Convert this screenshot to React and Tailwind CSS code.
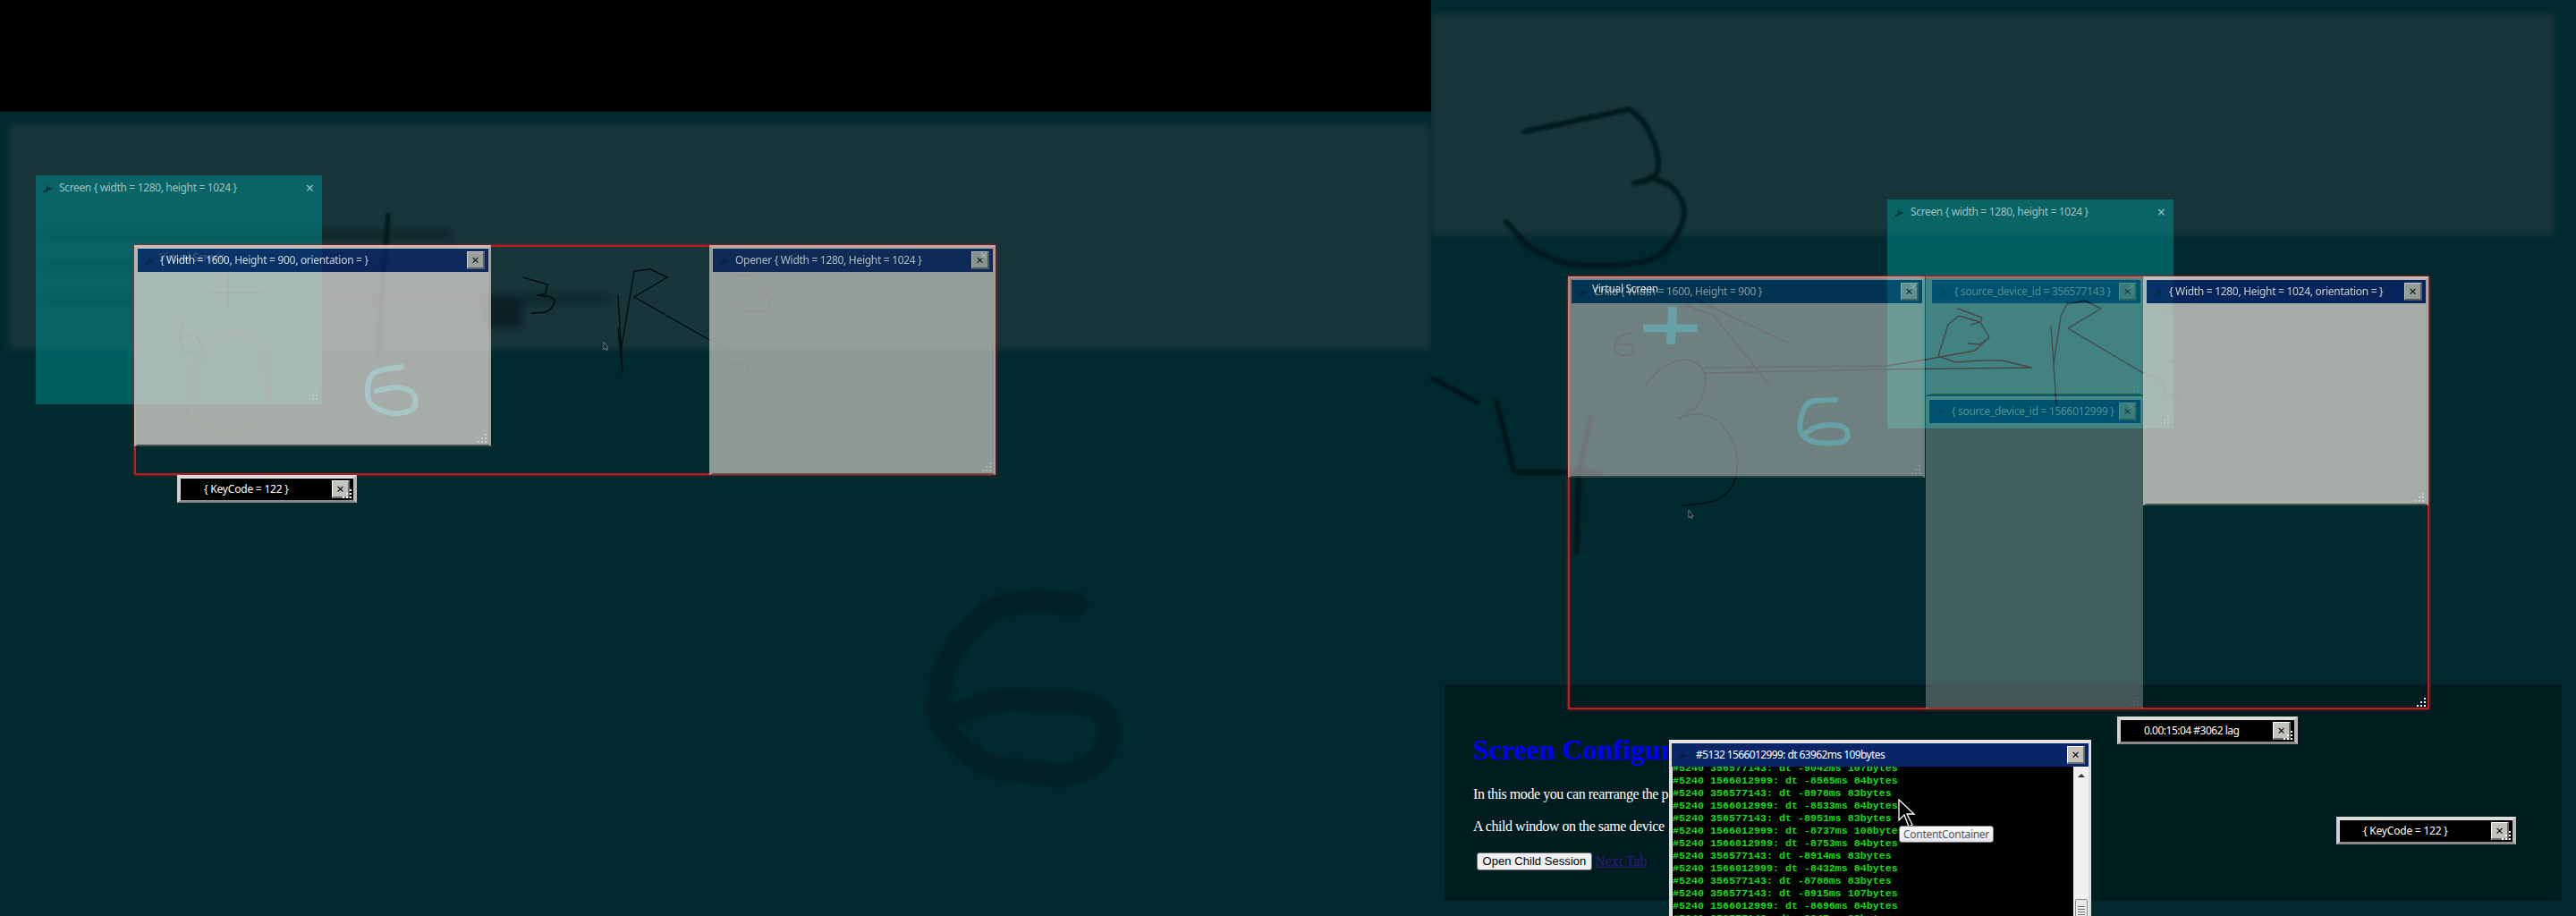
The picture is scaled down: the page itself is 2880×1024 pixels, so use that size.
import clsx from 'clsx'

const logLines = [
  '#5240 356577143: dt -9042ms 107bytes',
  '#5240 1566012999: dt -8565ms 84bytes',
  '#5240 356577143: dt -8978ms 83bytes',
  '#5240 1566012999: dt -8533ms 84bytes',
  '#5240 356577143: dt -8951ms 83bytes',
  '#5240 1566012999: dt -8737ms 108bytes',
  '#5240 1566012999: dt -8753ms 84bytes',
  '#5240 356577143: dt -8914ms 83bytes',
  '#5240 1566012999: dt -8432ms 84bytes',
  '#5240 356577143: dt -8788ms 83bytes',
  '#5240 356577143: dt -8915ms 107bytes',
  '#5240 1566012999: dt -8696ms 84bytes',
  '#5240 356577143: dt -8847ms 83bytes',
]

// catmull-rom through the sampled pen points, so the digits don't look polygonal
const smooth = (pts) => {
  let d = `M${pts[0][0]} ${pts[0][1]}`
  for (let i = 0; i < pts.length - 1; i++) {
    const p0 = pts[i - 1] || pts[i]
    const p1 = pts[i]
    const p2 = pts[i + 1]
    const p3 = pts[i + 2] || p2
    const c1x = p1[0] + (p2[0] - p0[0]) / 6
    const c1y = p1[1] + (p2[1] - p0[1]) / 6
    const c2x = p2[0] - (p3[0] - p1[0]) / 6
    const c2y = p2[1] - (p3[1] - p1[1]) / 6
    d += ` C${c1x} ${c1y} ${c2x} ${c2y} ${p2[0]} ${p2[1]}`
  }
  return d
}

const WaveIcon = ({ className }) => (
  <svg viewBox="0 0 14 14" className={clsx('w-[13px] h-[13px] shrink-0', className)}>
    <path
      d="M1 13 L3 9 L4.5 10.5 L6.5 2 L7.5 8 L9 5 L10 7 L13 6.5 L10 9 L8 8.5 L6.5 10 L5 12 L3.5 11 Z"
      fill="currentColor"
    />
  </svg>
)

const Grip = ({ className }) => (
  <svg viewBox="0 0 12 12" className={clsx('absolute w-[12px] h-[12px]', className)}>
    <g fill="#ffffff">
      <rect x="8" y="0" width="2" height="2" />
      <rect x="4" y="4" width="2" height="2" />
      <rect x="8" y="4" width="2" height="2" />
      <rect x="0" y="8" width="2" height="2" />
      <rect x="4" y="8" width="2" height="2" />
      <rect x="8" y="8" width="2" height="2" />
    </g>
  </svg>
)

const CloseButton = ({ ghost, className }) => (
  <div
    className={clsx(
      'relative w-[20px] h-[20px] shrink-0 flex items-center justify-center bg-[#c4c2bc] border-t border-l border-t-white border-l-white border-b-2 border-r-2 border-b-[#6c6c6c] border-r-[#6c6c6c] text-[15px] leading-none text-black',
      className
    )}
  >
    ×
    {ghost && (
      <span className="absolute -top-[4px] right-0 text-[15px] leading-none text-white">
        ×
      </span>
    )}
  </div>
)

const Win = ({ title, ghost, className, titleClassName, children }) => (
  <div
    className={clsx(
      'absolute flex flex-col bg-[#dad6d0] border-t-4 border-l-4 border-r-[3px] border-b-2 border-t-[#e9e5e0] border-l-[#dcd8d2] border-r-[#d0ccc6] border-b-[#5a5a5a]',
      className
    )}
  >
    <div
      className={clsx(
        'h-[26px] flex items-center pl-[6px] pr-[4px] gap-[6px] bg-[#0a2468] text-white',
        titleClassName
      )}
    >
      <WaveIcon className="text-[#0a1a3a]" />
      <span className="flex-1 min-w-0 whitespace-nowrap text-[12px] tracking-[-0.3px]">{title}</span>
      <CloseButton ghost={ghost} />
    </div>
    {children}
    <Grip className="right-0 bottom-0" />
  </div>
)

const ScreenWin = ({ className }) => (
  <div className={clsx('absolute bg-[#008080]/60 text-[#9cc4c4]', className)}>
    <div className="h-[28px] flex items-center pl-[7px] pr-[9px] gap-[6px]">
      <WaveIcon className="text-[#0a2a3a]" />
      <span className="flex-1 min-w-0 whitespace-nowrap text-[12px] tracking-[-0.35px]">
        Screen {'{'} width = 1280, height = 1024 {'}'}
      </span>
      <span className="text-[16px] leading-none">×</span>
    </div>
    <Grip className="right-[3px] bottom-[3px] opacity-30" />
  </div>
)

const MiniWin = ({ title, className, textClassName }) => (
  <div
    className={clsx(
      'absolute h-[31px] w-[201px] flex items-center pl-[26px] pr-[4px] bg-black border-t-4 border-l-4 border-r-4 border-b-[3px] border-t-[#dcdcdc] border-l-[#d0d0d0] border-r-[#b8b8b8] border-b-[#8a8a8a] text-white',
      className
    )}
  >
    <span className={clsx('flex-1 min-w-0 whitespace-nowrap text-[12px]', textClassName)}>{title}</span>
    <CloseButton />
    <Grip className="right-0 bottom-0" />
  </div>
)

const SmallCursor = ({ className }) => (
  <svg viewBox="0 0 8 12" className={clsx('absolute w-[7px] h-[11px]', className)}>
    <path d="M1 0 L1 10 L3 8 L5 11 L6 10 L4.5 7.5 L7 7.5 Z" fill="#0a1a1c" stroke="#9fb0b0" strokeWidth="0.7" />
  </svg>
)

const InkBehind = () => (
  <svg viewBox="0 0 2880 1024" className="absolute inset-0 w-[2880px] h-[1024px]">
    {/* big blurred digits on the desktop */}
    <g fill="none" stroke="#01191c" strokeLinejoin="round" strokeLinecap="round" className="blur-[1.5px]">
      <path
        strokeWidth="26"
        stroke="#012125"
        d={smooth([
          [1203, 675], [1147, 673], [1110, 682], [1073, 717], [1053, 760], [1053, 810], [1100, 853],
          [1153, 863], [1197, 865], [1233, 843], [1237, 803], [1213, 787], [1160, 783], [1113, 783], [1073, 797],
        ])}
      />
      <polyline strokeWidth="6" points="1705,147 1822,122" />
      <path strokeWidth="6" d={smooth([[1822, 122], [1840, 140], [1853, 173], [1850, 197], [1827, 205]])} />
      <path
        strokeWidth="6"
        d={smooth([
          [1845, 198], [1870, 210], [1883, 237], [1870, 270], [1845, 290], [1794, 297], [1748, 293], [1712, 277], [1684, 248],
        ])}
      />
      <polyline strokeWidth="5" stroke="#011316" points="1602,423 1652,450" />
      <polyline strokeWidth="5" stroke="#011316" points="1673,448 1693,528 1790,528" />
      <polyline strokeWidth="5" stroke="#011316" points="1778,467 1765,530 1763,618" />
      <polyline strokeWidth="5" points="434,240 430,290 422,400" />
    </g>
    {/* thin strokes */}
    <g fill="none" stroke="#040c0e" strokeWidth="1.4" strokeLinejoin="round" strokeLinecap="round">
      <polyline points="585,310 612,318 610,328 601,330" />
      <path d={smooth([[601, 330], [615, 332], [620, 338], [612, 348], [594, 350]])} />
      <polyline points="691,330 696,417 691,367 694,393 709,303 727,301 746,310 709,332 793,380" />
      {/* these run under the nearly opaque windows and barely show */}
      <g opacity="0.45">
        <polyline points="793,380 811,387 814,407 841,407" />
        <polyline points="838,392 834,432" />
        <polyline points="818,310 846,306 855,323 850,325 864,333 857,347 836,349 814,337" />
        <polyline points="235,327 293,327" />
        <polyline points="255,307 255,343" />
        <polyline points="212,352 204,358 201,378 206,392 220,396 226,386 218,374 202,378" />
        <polyline points="2396,417 2414,423 2422,442 2443,442" />
        <polyline points="2440,420 2437,460" />
        <polyline points="2422,345 2452,340 2458,365 2445,370 2466,385 2450,400 2425,405" />
      </g>
      <path
        strokeWidth="5"
        stroke="#5a3a36"
        opacity="0.3"
        className="blur-[1px]"
        d={smooth([[245, 373], [222, 400], [214, 450], [222, 475], [260, 482], [290, 475], [300, 450], [297, 400], [280, 375], [245, 373]])}
      />
      <path d={smooth([[1840, 430], [1860, 410], [1886, 402], [1904, 413], [1906, 433], [1898, 453], [1876, 468]])} />
      <path d={smooth([[1876, 468], [1901, 463], [1927, 477], [1942, 510], [1937, 543], [1916, 560], [1881, 565]])} />
      <polyline points="1824,372 1809,377 1804,390 1812,398 1827,395 1824,385 1804,385" />
      <polyline points="1886,330 1998,383" />
      <polyline points="1883,340 1916,353 1978,430" />
      <polyline points="1906,411 2110,409 2153,402 2208,392 2224,377 2214,360 2190,353 2178,363 2167,398 2186,405 2214,403 2239,403 2271,411 2100,413 1906,417" />
      <polyline points="2189,345 2216,355 2214,360 2204,363" />
      <polyline points="2200,384 2214,385 2220,380" />
      <polyline points="2293,365 2296,407 2299,452 2296,407 2304,353 2311,340 2331,336 2349,345 2312,367 2396,417" />
    </g>
  </svg>
)

const InkAbove = () => (
  <svg viewBox="0 0 2880 1024" className="absolute inset-0 w-[2880px] h-[1024px] pointer-events-none">
    <g fill="none" strokeLinejoin="round" strokeLinecap="round">
      <path
        stroke="#a9c6c6"
        strokeWidth="6"
        d={smooth([[449, 410], [418, 417], [411, 437], [416, 453], [439, 462], [462, 457], [462, 440], [444, 433], [421, 437]])}
      />
      <path
        stroke="#65a1a6"
        strokeWidth="6"
        d={smooth([[2052, 447], [2023, 450], [2013, 470], [2016, 487], [2034, 495], [2062, 493], [2064, 480], [2049, 475], [2029, 478], [2018, 485]])}
      />
      <polyline stroke="#65a1a6" strokeWidth="9" strokeLinecap="butt" points="1837,367 1898,367" />
      <polyline stroke="#65a1a6" strokeWidth="10" strokeLinecap="butt" points="1870,343 1868,385" />
    </g>
  </svg>
)

const LogWindow = () => (
  <div className="absolute left-[1866px] top-[827px] w-[472px] h-[260px] flex flex-col bg-[#f0f0f0] border-t-4 border-x-[3px] border-t-[#e4e4e4] border-x-[#dcdcdc]">
    <div className="h-[26px] shrink-0 flex items-center pl-[6px] pr-[4px] gap-[8px] bg-[#0a2468] text-white">
      <WaveIcon className="text-[#0a1a3a]" />
      <span className="flex-1 min-w-0 whitespace-nowrap text-[12px] tracking-[-0.6px]">
        #5132 1566012999: dt 63962ms 109bytes
      </span>
      <CloseButton />
    </div>
    <div className="flex flex-1 min-h-0">
      <div className="flex-1 ml-[1px] bg-black overflow-hidden">
        <div className="-mt-[5px] font-['Liberation_Mono',monospace] font-bold text-[11.67px] leading-[14px] text-[#0fdc10]">
          {logLines.map((line, idx) => (
            <div key={idx} className="whitespace-nowrap">
              {line}
            </div>
          ))}
        </div>
      </div>
      <div className="w-[17px] bg-[#f0f0f0] flex flex-col items-center">
        <div className="mt-[8px] w-0 h-0 border-x-[4px] border-x-transparent border-b-[4px] border-b-[#333]" />
        <div className="mt-[136px] w-[14px] h-[60px] bg-[#e8e8e8] border border-[#8c8c8c] rounded-[2px] flex flex-col items-center gap-[2px] pt-[7px]">
          <div className="w-[8px] h-px bg-[#777]" />
          <div className="w-[8px] h-px bg-[#777]" />
          <div className="w-[8px] h-px bg-[#777]" />
          <div className="w-[8px] h-px bg-[#777]" />
        </div>
      </div>
    </div>
  </div>
)

const App = () => {
  return (
    <div className="relative w-[2880px] h-[1024px] overflow-hidden flex bg-[#012a2e] font-['Noto_Sans',sans-serif]">
      {/* left screen */}
      <div className="w-[1600px] h-full overflow-hidden flex flex-col">
        <div className="h-[125px] shrink-0 bg-black z-10" />
        <div className="mt-[15px] ml-[10px] h-[250px] bg-[#183639] blur-[4px] flex flex-col pl-[40px] pt-[118px]">
          <div className="w-[455px] h-[9px] bg-[#0a1c22]/80 blur-[2px]" />
          <div className="mt-[26px] w-[370px] h-[9px] bg-[#0a1c22]/70 blur-[2px]" />
          <div className="mt-[28px] w-[634px] h-[9px] bg-[#0a1c22]/70 blur-[2px]" />
          <div className="ml-[490px] -mt-[3px] w-[44px] h-[30px] bg-[#0a1c22]/80 blur-[1px]" />
        </div>
      </div>

      {/* right screen */}
      <div className="w-[1280px] h-full overflow-hidden flex flex-col">
        <div className="mt-[15px] mr-[24px] h-[248px] shrink-0 bg-[#183639] blur-[4px]" />
        <div className="mt-[502px] ml-[15px] mr-[16px] h-[242px] shrink-0 bg-[#021d20] pl-[32px] pt-[55px] font-['Liberation_Serif',serif] text-white text-[16px] leading-[18px]">
          <h1 className="text-[32px] leading-[37px] font-bold text-[#0000ff] whitespace-nowrap">
            Screen Configuration
          </h1>
          <p className="mt-[22px] tracking-[-0.45px]">In this mode you can rearrange the p</p>
          <p className="mt-[18px] tracking-[-0.45px]">A child window on the same device</p>
          <div className="mt-[20px] flex items-center gap-[3px]">
            <button className="ml-[4px] w-[129px] h-[20px] flex items-center justify-center bg-[#efefef] border border-[#707070] rounded-[3px] font-['Liberation_Sans',sans-serif] text-[13px] tracking-[0.05px] text-black">
              Open Child Session
            </button>
            <a className="underline text-[#2b1a7e]">Next Tab</a>
          </div>
        </div>
      </div>

      <ScreenWin className="left-[40px] top-[196px] w-[320px] h-[256px]" />
      <ScreenWin className="left-[2110px] top-[223px] w-[320px] h-[256px]" />

      <InkBehind />

      {/* left virtual screen */}
      <div className="absolute left-[150px] top-[274px] w-[963px] h-[257px] border-2 border-[#c01c20] shadow-[0_0_3px_#c01c20]" />
      <div className="absolute left-[178px] top-[279px] text-[12px] tracking-[-0.3px] text-white">Virtual Screen</div>
      <Win
        title="{ Width = 1600, Height = 900, orientation = }"
        className="left-[150px] top-[274px] w-[399px] h-[225px] opacity-[.76]"
      />
      <Win
        ghost
        title="Opener { Width = 1280, Height = 1024 }"
        className="left-[793px] top-[274px] w-[320px] h-[257px] opacity-[.65]"
      />
      <SmallCursor className="left-[674px] top-[382px]" />
      <MiniWin
        title="{ KeyCode = 122 }"
        textClassName="tracking-[-0.2px]"
        className="left-[198px] top-[531px]"
      />

      {/* right virtual screen */}
      <div className="absolute left-[1753px] top-[309px] w-[963px] h-[484px] border-2 border-[#c01c20] shadow-[0_0_3px_#c01c20]" />
      <Win
        ghost
        title="Child { Width = 1600, Height = 900 }"
        className="left-[1753px] top-[309px] w-[399px] h-[225px] opacity-50"
        titleClassName="bg-[#04407a]"
      />
      <div className="absolute left-[1780px] top-[314px] text-[12px] tracking-[-0.3px] text-white opacity-80">Virtual Screen</div>
      <Win
        ghost
        title="{ source_device_id = 356577143 }"
        className="left-[2153px] top-[309px] w-[243px] h-[133px] opacity-30 border-l-[7px] border-l-[#001010] pl-0"
        titleClassName="bg-[#003a9a]"
      />
      <Win
        ghost
        title="{ source_device_id = 1566012999 }"
        className="left-[2153px] top-[443px] w-[243px] h-[350px] opacity-30"
        titleClassName="bg-[#003a9a]"
      />
      <Win
        title="{ Width = 1280, Height = 1024, orientation = }"
        className="left-[2396px] top-[309px] w-[319px] h-[256px] opacity-[.76]"
      />
      <Grip className="left-[2702px] top-[780px]" />
      <SmallCursor className="left-[1887px] top-[570px]" />
      <InkAbove />

      <MiniWin
        title="0.00:15:04 #3062 lag"
        textClassName="tracking-[-0.5px]"
        className="left-[2367px] top-[801px] w-[202px]"
      />
      <MiniWin
        title="{ KeyCode = 122 }"
        textClassName="tracking-[-0.2px]"
        className="left-[2612px] top-[913px]"
      />

      <LogWindow />

      {/* mouse pointer with its tooltip */}
      <svg viewBox="0 0 20 34" className="absolute left-[2122px] top-[893px] w-[20px] h-[34px]">
        <path d="M1 1 L1 24 L7 18 L12 31 L16 29 L10 17 L18 17 Z" fill="#000000" stroke="#ffffff" strokeWidth="1.3" />
      </svg>
      <div className="absolute left-[2123px] top-[923px] w-[106px] h-[19px] flex items-center justify-center rounded-[3px] border border-[#767676] bg-gradient-to-b from-white to-[#e4e5f0] text-[12px] tracking-[-0.3px] text-[#575757]">
        ContentContainer
      </div>
    </div>
  )
}

export default App
